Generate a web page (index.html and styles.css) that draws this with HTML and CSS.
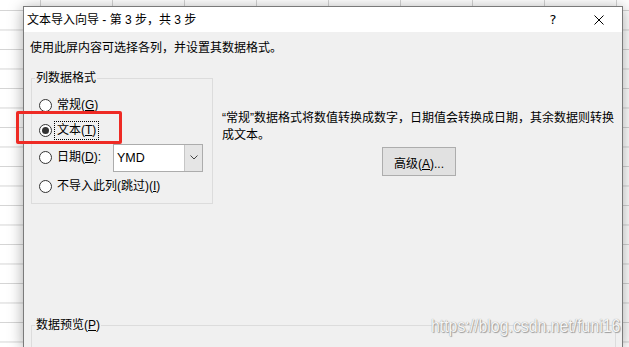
FILE: index.html
```html
<!DOCTYPE html>
<html lang="zh-CN">
<head>
<meta charset="utf-8">
<title>文本导入向导</title>
<link rel="stylesheet" href="styles.css">
</head>
<body>
<div class="dialog">
  <div class="titlebar">
    <span class="title">文本导入向导 - 第 3 步，共 3 步</span>
    <span class="tb-btn help">?</span>
    <span class="tb-btn close"><svg width="10" height="10" viewBox="0 0 10 10"><path d="M0.5 0.5L9.5 9.5M9.5 0.5L0.5 9.5" stroke="#000" stroke-width="1" fill="none"/></svg></span>
  </div>
  <div class="content">
    <p class="intro">使用此屏内容可选择各列，并设置其数据格式。</p>
    <div class="main">
      <fieldset class="group format">
        <legend>列数据格式</legend>
        <div class="rows">
          <div class="row r-short"><span class="radio"></span><span class="lbl">常规(<u>G</u>)</span></div>
          <div class="row r-short"><span class="radio checked"></span><span class="lbl focus">文本(<u>T</u>)</span></div>
          <div class="row r-tall"><span class="radio"></span><span class="lbl date">日期(<u>D</u>):</span>
            <span class="combo"><span class="combo-text">YMD</span><span class="combo-btn"><svg width="8" height="5" viewBox="0 0 8 5"><path d="M0.5 0.5L4 4L7.5 0.5" stroke="#444" stroke-width="1" fill="none"/></svg></span></span>
          </div>
          <div class="row r-tall"><span class="radio"></span><span class="lbl">不导入此列(跳过)(<u>I</u>)</span></div>
        </div>
      </fieldset>
      <div class="desc">
        <p class="desc-text">“常规”数据格式将数值转换成数字，日期值会转换成日期，其余数据则转换成文本。</p>
        <button class="btn" type="button">高级(<u>A</u>)...</button>
      </div>
    </div>
    <fieldset class="group preview">
      <legend>数据预览(<u>P</u>)</legend>
    </fieldset>
  </div>
</div>
<div class="highlight"></div>
<div class="watermark">https://blog.csdn.net/funi16</div>
</body>
</html>
```
FILE: styles.css
```css
html, body {
  margin: 0;
  height: 100%;
  overflow: hidden;
}
body {
  position: relative;
  font-family: "Liberation Sans", "Noto Sans CJK SC", sans-serif;
  font-size: 12px;
  color: #000;
  background-color: #fff;
  background-image:
    linear-gradient(to right, #d4d4d4 1px, transparent 1px),
    linear-gradient(to bottom, #d4d4d4 1px, transparent 1px);
  background-size: 72px 19.5px;
  background-position: 40px 10px;
}
.dialog {
  margin: 6px 0 0 23px;
  width: 600px;
  height: calc(100% - 6px);
  box-sizing: border-box;
  border: 1px solid #7a7a7a;
  border-bottom: 0;
  background: #f0f0f0;
  box-shadow: 0 2px 14px rgba(0, 0, 0, 0.35);
  display: flex;
  flex-direction: column;
  overflow: hidden;
}
.titlebar {
  height: 25px;
  background: #fff;
  display: flex;
  align-items: center;
  flex: none;
}
.title {
  flex: 1;
  padding-left: 3px;
  line-height: 16px;
}
.tb-btn {
  width: 46px;
  height: 25px;
  display: flex;
  align-items: center;
  justify-content: center;
}
.help {
  font-family: "DejaVu Sans", sans-serif;
  font-size: 13px;
}
.content {
  flex: 1;
  min-height: 0;
  overflow: hidden;
  padding: 8px 7px 0;
}
.intro {
  margin: 0 0 0 -1px;
  line-height: 16px;
}
.main {
  display: flex;
  align-items: flex-start;
  margin-top: 14px;
}
.group {
  margin: 0;
  padding: 0;
  border: 1px solid #dcdcdc;
  box-sizing: border-box;
}
.group legend {
  margin-left: 3px;
  padding: 0 1px;
  line-height: 16px;
}
.format {
  width: 182px;
  flex: none;
}
.rows {
  padding: 7px 0 2px 7px;
}
.row {
  display: flex;
  align-items: center;
}
.r-short { height: 25px; }
.r-tall { height: 29px; }
.radio {
  width: 13px;
  height: 13px;
  box-sizing: border-box;
  border: 1px solid #333;
  border-radius: 50%;
  background: #fff;
  flex: none;
  display: flex;
  align-items: center;
  justify-content: center;
}
.radio.checked::after {
  content: "";
  width: 7px;
  height: 7px;
  border-radius: 50%;
  background: #333;
}
.lbl {
  margin-left: 5px;
  line-height: 17px;
}
.lbl.focus {
  margin-left: 2px;
  padding: 0 2px;
  border: 1px dotted #000;
}
.lbl.date {
  width: 56px;
  flex: none;
}
.combo {
  width: 90px;
  height: 28px;
  box-sizing: border-box;
  border: 1px solid #acacac;
  background: #fff;
  display: flex;
}
.combo-text {
  flex: 1;
  padding-left: 3px;
  font-size: 12.5px;
  line-height: 26px;
}
.combo-btn {
  width: 17px;
  background: #e5e5e5;
  border-left: 1px solid #c6c6c6;
  display: flex;
  align-items: center;
  justify-content: center;
}
.desc {
  margin-left: 9px;
  padding-top: 40px;
  width: 400px;
}
.desc-text {
  margin: 0;
  line-height: 17px;
}
.btn {
  display: block;
  margin: 3px 0 0 160px;
  width: 74px;
  height: 29px;
  padding: 2px 0 0;
  border: 1px solid #adadad;
  background: #e1e1e1;
  font: inherit;
  color: #000;
}
.preview {
  margin-top: 113px;
  width: 585px;
  height: 60px;
}
.highlight {
  position: absolute;
  left: 16px;
  top: 111px;
  width: 106px;
  height: 33px;
  box-sizing: border-box;
  border: 3px solid #ee2a24;
  border-radius: 2px;
}
.watermark {
  position: absolute;
  left: 431px;
  top: 315px;
  font-family: "Liberation Sans", sans-serif;
  font-size: 18px;
  line-height: 22px;
  transform: scaleX(0.88);
  transform-origin: left top;
  color: #f6f6f6;
  text-shadow: 0 0 1px #8a8a8a, 1px 1px 1px #a0a0a0;
}
```
